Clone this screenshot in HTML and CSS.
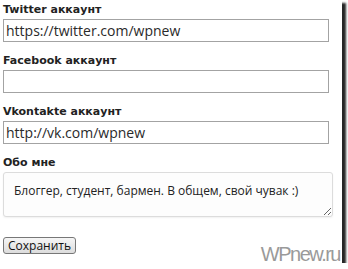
FILE: index.html
```html
<!DOCTYPE html>
<html lang="ru">
<head>
  <meta charset="UTF-8">
  <title>Профиль</title>
  <link rel="stylesheet" href="styles.css">
</head>
<body>

  <div class="shot">
    <!-- форма профиля -->
    <form class="profile">
      <div class="field">
        <label for="twitter">Twitter аккаунт</label>
        <input type="text" id="twitter" value="https://twitter.com/wpnew">
      </div>
      <div class="field">
        <label for="facebook">Facebook аккаунт</label>
        <input type="text" id="facebook" value="">
      </div>
      <div class="field">
        <label for="vk">Vkontakte аккаунт</label>
        <input type="text" id="vk" value="http://vk.com/wpnew">
      </div>
      <div class="field about">
        <label for="about">Обо мне</label>
        <textarea id="about">Блоггер, студент, бармен. В общем, свой чувак :)</textarea>
      </div>
      <button type="button">Сохранить</button>
    </form>
    <span class="mark">WPnew.ru</span>
  </div>

</body>
</html>
```

FILE: styles.css
```css
body {
  margin: 0;
  padding: 0;
  background: white;
}
.shot {
  position: relative;
  width: 342px;
  height: 263px;
  background: white;
  box-shadow: 4px 3px 2px rgba(0,0,0,0.85);
  box-sizing: border-box;
  padding: 0 0 0 3px;
}
.profile {
  display: flex;
  flex-direction: column;
}
.field {
  display: flex;
  flex-direction: column;
  height: 51px;
}
.field.about {
  height: auto;
}
.field label {
  font-family: 'DejaVu Sans', sans-serif;
  font-weight: bold;
  font-size: 11px;
  color: #222;
  height: 19px;
  line-height: 19px;
}
.field input {
  width: 326px;
  height: 23px;
  box-sizing: border-box;
  margin: 0;
  border: 1px solid #a3a3a3;
  border-radius: 0;
  padding: 0 2px;
  font-family: 'Open Sans', sans-serif;
  font-size: 14px;
  color: #2a2a2a;
  background: white;
  outline: none;
}
.field textarea {
  width: 330px;
  height: 45px;
  box-sizing: border-box;
  margin: 0;
  border: 1px solid #dcdcdc;
  border-radius: 3px;
  padding: 9px 10px;
  font-family: 'Open Sans', sans-serif;
  font-size: 12px;
  color: #222;
  background: #fdfdfd;
  box-shadow: 0 1px 2px rgba(0,0,0,0.06);
  resize: both;
  outline: none;
}
.profile button {
  align-self: flex-start;
  margin-top: 20px;
  width: 73px;
  height: 17px;
  padding: 0;
  border: 1px solid #777;
  border-radius: 3px;
  background: linear-gradient(to bottom, #f6f6f6, #dcdcdc);
  font-family: 'Open Sans', sans-serif;
  font-size: 12px;
  line-height: 15px;
  color: #111;
}
.mark {
  position: absolute;
  right: 2px;
  bottom: -3px;
  font-family: 'Liberation Sans', sans-serif;
  font-size: 20px;
  letter-spacing: -1.5px;
  color: #9a9a9a;
}
```
